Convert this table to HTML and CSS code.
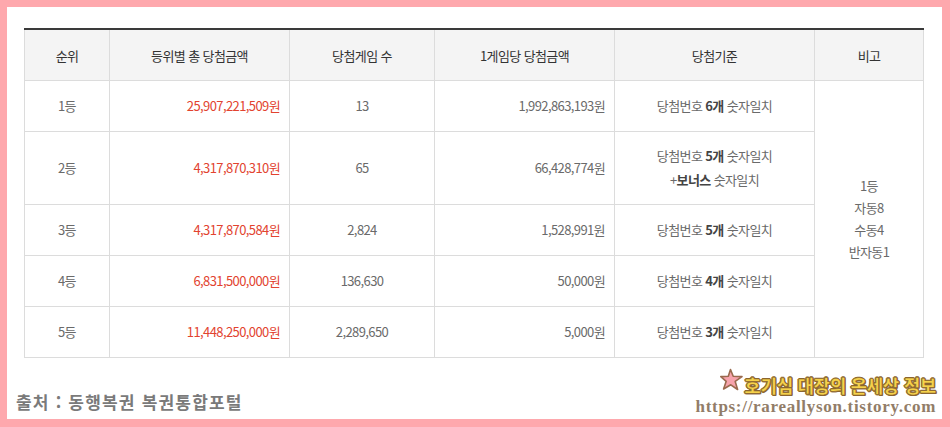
FILE: index.html
```html
<!DOCTYPE html>
<html lang="ko">
<head>
<meta charset="utf-8">
<link rel="stylesheet" href="styles.css">
</head>
<body>
<div class="frame">
  <table class="prize">
    <colgroup>
      <col class="c1"><col class="c2"><col class="c3"><col class="c4"><col class="c5"><col class="c6">
    </colgroup>
    <thead>
      <tr>
        <th>순위</th>
        <th>등위별 총 당첨금액</th>
        <th>당첨게임 수</th>
        <th>1게임당 당첨금액</th>
        <th>당첨기준</th>
        <th>비고</th>
      </tr>
    </thead>
    <tbody>
      <tr>
        <td>1등</td>
        <td class="num red">25,907,221,509원</td>
        <td>13</td>
        <td class="num">1,992,863,193원</td>
        <td>당첨번호 <b>6개</b> 숫자일치</td>
        <td class="note" rowspan="5">1등<br>자동8<br>수동4<br>반자동1</td>
      </tr>
      <tr class="tall">
        <td>2등</td>
        <td class="num red">4,317,870,310원</td>
        <td>65</td>
        <td class="num">66,428,774원</td>
        <td>당첨번호 <b>5개</b> 숫자일치<br>+<b>보너스</b> 숫자일치</td>
      </tr>
      <tr>
        <td>3등</td>
        <td class="num red">4,317,870,584원</td>
        <td>2,824</td>
        <td class="num">1,528,991원</td>
        <td>당첨번호 <b>5개</b> 숫자일치</td>
      </tr>
      <tr>
        <td>4등</td>
        <td class="num red">6,831,500,000원</td>
        <td>136,630</td>
        <td class="num">50,000원</td>
        <td>당첨번호 <b>4개</b> 숫자일치</td>
      </tr>
      <tr>
        <td>5등</td>
        <td class="num red">11,448,250,000원</td>
        <td>2,289,650</td>
        <td class="num">5,000원</td>
        <td>당첨번호 <b>3개</b> 숫자일치</td>
      </tr>
    </tbody>
  </table>
  <div class="footer">
    <div class="source">출처 : 동행복권 복권통합포털</div>
    <div class="mark">
      <div class="mark-title">
        <svg class="star" viewBox="0 0 24 24" width="26" height="24"><path d="M10.5 1.5 L13.2 8.2 L22 8.6 L15.2 13.4 L17.6 21.5 L10.8 16.8 L3.6 21 L6.2 13.3 L0.8 8.6 L8.3 8.2 Z" fill="#f7a3ac" stroke="#9a6a4e" stroke-width="1.6" stroke-linejoin="round"/></svg>
        <span class="mark-text">호기심 대장의 온세상 정보</span>
      </div>
      <div class="mark-url">https://rareallyson.tistory.com</div>
    </div>
  </div>
</div>
</body>
</html>
```
FILE: styles.css
```css
html, body {
  margin: 0;
  padding: 0;
}
body {
  background: #fea8ad;
  width: 950px;
  height: 427px;
  padding: 7px 8px 8px 7px;
  box-sizing: border-box;
  font-family: "Noto Sans CJK KR", "Noto Sans", sans-serif;
}
.frame {
  background: #fff;
  height: 412px;
  padding: 21px 0 0 17px;
  box-sizing: border-box;
  overflow: hidden;
}
.prize {
  border-collapse: collapse;
  width: 899px;
  table-layout: fixed;
  border-top: 2px solid #3a3a3a;
  font-size: 13px;
  letter-spacing: -0.6px;
  color: #6a6a6a;
}
.c1 { width: 85px; }
.c2 { width: 180px; }
.c3 { width: 145px; }
.c4 { width: 180px; }
.c5 { width: 200px; }
.c6 { width: 109px; }
.prize th {
  background: #f4f4f4;
  color: #333;
  font-weight: normal;
  height: 50px;
  border: 1px solid #dcdcdc;
  border-top: none;
  padding: 0;
}
.prize td {
  height: 50px;
  border: 1px solid #dcdcdc;
  text-align: center;
  padding: 0 9px;
  line-height: 24px;
}
.prize tr.tall td {
  height: 72px;
}
.prize td.num {
  text-align: right;
}
.prize td.red {
  color: #e2432f;
}
.prize b {
  color: #444;
  font-weight: bold;
}
.prize td.note {
  line-height: 22px;
}
.footer {
  display: flex;
  justify-content: space-between;
  align-items: flex-end;
  margin-top: 16px;
  padding-right: 6px;
  margin-left: -8px;
}
.source {
  font-size: 17px;
  font-weight: bold;
  color: #7a7a7a;
  line-height: 24px;
  padding-bottom: 0;
  letter-spacing: 1.2px;
}
.mark {
  display: flex;
  flex-direction: column;
  align-items: flex-end;
  gap: 3px;
}
.mark-title {
  display: flex;
  align-items: center;
  height: 22px;
}
.star {
  margin-right: -1px;
  margin-top: -10px;
}
.mark-text {
  font-size: 18px;
  font-weight: 900;
  line-height: 22px;
  color: #f6d24a;
  letter-spacing: -0.4px;
  -webkit-text-stroke: 0.6px #8a6530;
  text-shadow: 1px 0 #8a6530, -1px 0 #8a6530, 0 1px #8a6530, 0 -1px #8a6530, 1px 1px #8a6530;
}
.mark-url {
  font-family: "Liberation Serif", serif;
  font-weight: bold;
  font-size: 17px;
  color: #927d68;
  letter-spacing: 0.7px;
  line-height: 15px;
}
```
